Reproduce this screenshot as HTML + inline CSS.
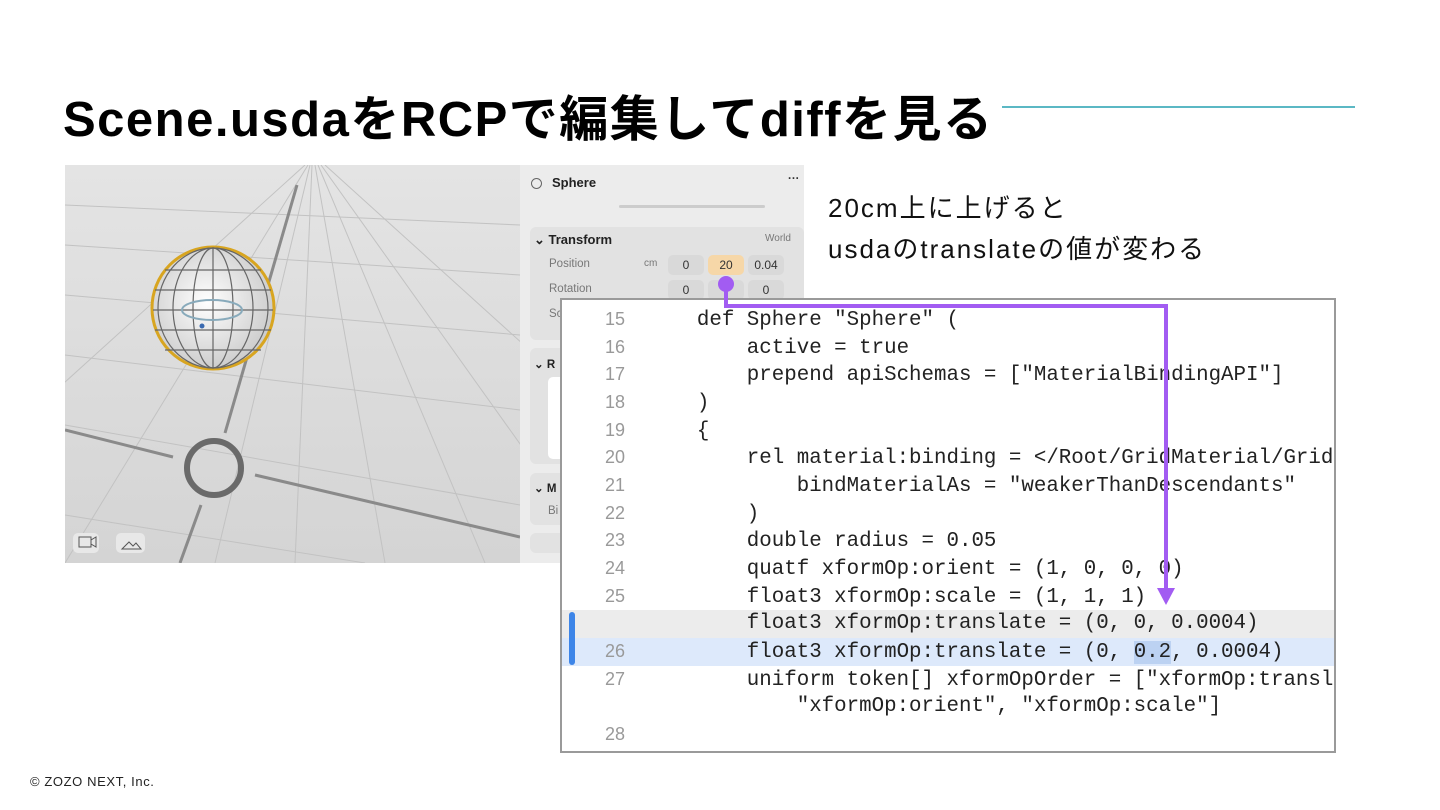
<!DOCTYPE html>
<html><head><meta charset="utf-8"><style>
*{margin:0;padding:0;box-sizing:border-box}
body{width:1440px;height:810px;background:#fff;position:relative;overflow:hidden;font-family:"Liberation Sans","Noto Sans CJK JP",sans-serif}
.abs{position:absolute}
h1{position:absolute;left:63px;top:80px;font-size:49px;font-weight:bold;color:#000;letter-spacing:1.5px;white-space:nowrap}
.panel{left:520px;top:165px;width:284px;height:398px;background:#ececec;font-size:11.5px;color:#777}
.code{left:560px;top:298px;width:776px;height:455px;background:#fff;border:2px solid #9a9a9a;overflow:hidden;font-family:"Liberation Mono",monospace;font-size:20.8px;color:#222}
.ln{position:absolute;height:27.7px;line-height:27.7px;white-space:pre;width:776px}
.num{display:inline-block;width:63px;text-align:right;color:#999;font-family:"Liberation Sans",sans-serif;font-size:18px;margin-right:-3px}
.fld{position:absolute;background:#d9d9d9;border-radius:5px;height:20px;line-height:20px;text-align:center;color:#333;font-size:12px}
</style></head><body>
<h1>Scene.usdaをRCPで編集してdiffを見る</h1>
<div class="abs" style="left:1002px;top:106px;width:353px;height:2px;background:#5bb8c4"></div>

<svg class="abs" style="left:65px;top:165px" width="455" height="398" viewBox="0 0 455 398">
<defs><linearGradient id="bg" x1="0" y1="0" x2="0" y2="1"><stop offset="0" stop-color="#e4e4e4"/><stop offset="1" stop-color="#d4d4d4"/></linearGradient>
<radialGradient id="sp" cx="0.45" cy="0.45" r="0.6"><stop offset="0" stop-color="#fff"/><stop offset="1" stop-color="#c8c8c8"/></radialGradient></defs>
<rect width="455" height="398" fill="url(#bg)"/>
<g stroke="#c2c2c2" stroke-width="1" fill="none">
<line x1="240" y1="0" x2="-200" y2="398"/><line x1="243" y1="0" x2="0" y2="398"/><line x1="245" y1="0" x2="150" y2="398"/><line x1="247" y1="0" x2="230" y2="398"/><line x1="250" y1="0" x2="320" y2="398"/><line x1="253" y1="0" x2="420" y2="398"/><line x1="256" y1="0" x2="540" y2="398"/><line x1="260" y1="0" x2="700" y2="398"/>
<line x1="0" y1="40" x2="455" y2="60"/><line x1="0" y1="80" x2="455" y2="110"/><line x1="0" y1="130" x2="455" y2="170"/><line x1="0" y1="190" x2="455" y2="245"/><line x1="0" y1="260" x2="455" y2="340"/><line x1="0" y1="350" x2="300" y2="398"/>
</g>
<g stroke="#8a8a8a" stroke-width="3"><line x1="0" y1="265" x2="108" y2="292"/><line x1="190" y1="310" x2="455" y2="372"/><line x1="160" y1="268" x2="232" y2="20"/><line x1="136" y1="340" x2="115" y2="398"/></g>
<circle cx="148" cy="143" r="61" fill="url(#sp)" stroke="#d8a520" stroke-width="3"/>
<g stroke="#666" stroke-width="1.2" fill="none"><ellipse cx="148" cy="143" rx="20" ry="60"/><ellipse cx="148" cy="143" rx="40" ry="60"/><ellipse cx="148" cy="143" rx="55" ry="60"/><line x1="148" y1="83" x2="148" y2="203"/>
<line x1="100" y1="105" x2="196" y2="105"/><line x1="90" y1="125" x2="206" y2="125"/><line x1="88" y1="145" x2="208" y2="145"/><line x1="90" y1="165" x2="206" y2="165"/><line x1="100" y1="185" x2="196" y2="185"/></g>
<ellipse cx="147" cy="145" rx="30" ry="10" fill="none" stroke="#8ab" stroke-width="2"/>
<circle cx="137" cy="161" r="2.5" fill="#3a6ab0"/>
<circle cx="149" cy="303" r="27" fill="none" stroke="#6a6a6a" stroke-width="6"/>
<rect x="8" y="368" width="26" height="20" rx="5" fill="#e8e8e8"/><rect x="51" y="368" width="29" height="20" rx="5" fill="#e8e8e8"/>
<path d="M14 372h12v10h-12zM26 375l5-3v10l-5-3" fill="none" stroke="#555"/><path d="M57 384l7-7 4 4 3-3 5 6z" fill="none" stroke="#555"/>
</svg>

<div class="abs panel">
<div class="abs" style="left:11px;top:13px;width:11px;height:11px;border:1px solid #666;border-radius:50%"></div>
<div class="abs" style="left:32px;top:10px;color:#222;font-weight:bold;font-size:13px">Sphere</div>
<div class="abs" style="left:268px;top:8px;color:#333;font-weight:bold">···</div>
<div class="abs" style="left:99px;top:40px;width:146px;height:3px;background:#ccc;border-radius:2px"></div>
<div class="abs" style="left:10px;top:62px;width:274px;height:113px;background:#e2e2e2;border-radius:6px"></div>
<div class="abs" style="left:14px;top:67px;color:#222;font-weight:bold;font-size:13px">⌄ Transform</div>
<div class="abs" style="left:245px;top:68px;font-size:10px">World</div>
<div class="abs" style="left:29px;top:93px">Position</div><div class="abs" style="left:124px;top:93px;font-size:10px">cm</div>
<div class="fld" style="left:148px;top:90px;width:36px">0</div><div class="fld" style="left:188px;top:90px;width:36px;background:#f6d7a8">20</div><div class="fld" style="left:228px;top:90px;width:36px">0.04</div>
<div class="abs" style="left:29px;top:118px">Rotation</div>
<div class="fld" style="left:148px;top:115px;width:36px">0</div><div class="fld" style="left:188px;top:115px;width:36px"></div><div class="fld" style="left:228px;top:115px;width:36px">0</div>
<div class="abs" style="left:29px;top:143px">Sc</div>
<div class="abs" style="left:10px;top:183px;width:274px;height:116px;background:#e2e2e2;border-radius:6px"></div>
<div class="abs" style="left:14px;top:192px;color:#222;font-weight:bold">⌄ R</div>
<div class="abs" style="left:28px;top:212px;width:40px;height:82px;background:#fff;border-radius:5px"></div>
<div class="abs" style="left:10px;top:308px;width:274px;height:52px;background:#e2e2e2;border-radius:6px"></div>
<div class="abs" style="left:14px;top:316px;color:#222;font-weight:bold">⌄ M</div>
<div class="abs" style="left:28px;top:340px">Bi</div>
<div class="abs" style="left:10px;top:368px;width:274px;height:20px;background:#e2e2e2;border-radius:6px"></div>
</div>

<div class="abs" style="left:828px;top:188px;font-size:26px;letter-spacing:2px;line-height:41px;color:#111;white-space:nowrap">20cm上に上げると<br>usdaのtranslateの値が変わる</div>

<div class="abs code">
<div class="ln" style="top:6px"><span class="num">15</span>      def Sphere "Sphere" (</div>
<div class="ln" style="top:34px"><span class="num">16</span>          active = true</div>
<div class="ln" style="top:61px"><span class="num">17</span>          prepend apiSchemas = ["MaterialBindingAPI"]</div>
<div class="ln" style="top:89px"><span class="num">18</span>      )</div>
<div class="ln" style="top:117px"><span class="num">19</span>      {</div>
<div class="ln" style="top:144px"><span class="num">20</span>          rel material:binding = &lt;/Root/GridMaterial/GridMaterial&gt;</div>
<div class="ln" style="top:172px"><span class="num">21</span>              bindMaterialAs = "weakerThanDescendants"</div>
<div class="ln" style="top:200px"><span class="num">22</span>          )</div>
<div class="ln" style="top:227px"><span class="num">23</span>          double radius = 0.05</div>
<div class="ln" style="top:255px"><span class="num">24</span>          quatf xformOp:orient = (1, 0, 0, 0)</div>
<div class="ln" style="top:283px"><span class="num">25</span>          float3 xformOp:scale = (1, 1, 1)</div>
<div class="ln" style="top:310px;background:#ececec"><span class="num"></span>          float3 xformOp:translate = (0, 0, 0.0004)</div>
<div class="ln" style="top:338px;background:#dde9fb"><span class="num">26</span>          float3 xformOp:translate = (0, <span style="background:#bcd2f2">0.2</span>, 0.0004)</div>
<div class="ln" style="top:366px"><span class="num">27</span>          uniform token[] xformOpOrder = ["xformOp:translate",</div>
<div class="ln" style="top:393px"><span class="num"></span>              "xformOp:orient", "xformOp:scale"]</div>
<div class="ln" style="top:421px"><span class="num">28</span></div>
<div class="abs" style="left:7px;top:312px;width:6px;height:53px;background:#3d85e8;border-radius:3px"></div>
</div>

<svg class="abs" style="left:0;top:0" width="1440" height="810">
<circle cx="726" cy="284" r="8" fill="#a25cf2"/>
<path d="M726 284V306H1166V592" fill="none" stroke="#a25cf2" stroke-width="4"/>
<path d="M1157 588h18l-9 17z" fill="#a25cf2"/>
</svg>
<div class="abs" style="left:30px;top:774px;font-size:13px;letter-spacing:0.6px;color:#222">© ZOZO NEXT, Inc.</div>
</body></html>
